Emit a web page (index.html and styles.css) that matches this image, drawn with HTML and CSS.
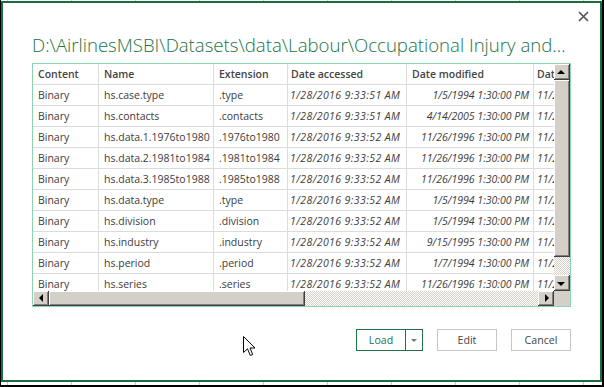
FILE: index.html
```html
<!DOCTYPE html>
<html lang="en">
<head>
    <meta charset="UTF-8">
    <meta name="viewport" content="width=device-width, initial-scale=1.0">
    <title>Navigator</title>
    <link rel="stylesheet" href="styles.css">
</head>
<body>
<div class="screen">
    <div class="sheet-top"></div>

    <div class="dialog">
        <div class="dialog-head">
            <button class="close" title="Close">
                <svg width="11" height="11" viewBox="0 0 11 11"><path d="M1 1L10 10M10 1L1 10" stroke="#555" stroke-width="1.7"/></svg>
            </button>
        </div>

        <h2 class="path-title">D:\AirlinesMSBI\Datasets\data\Labour\Occupational Injury and...</h2>

        <div class="grid-box">
            <div class="grid-main">
                <div class="viewport">
                    <table class="files">
                        <thead>
                            <tr>
                                <th class="c-content">Content</th>
                                <th class="c-name">Name</th>
                                <th class="c-ext">Extension</th>
                                <th class="c-acc">Date accessed</th>
                                <th class="c-mod">Date modified</th>
                                <th class="c-cre">Date created</th>
                            </tr>
                        </thead>
                        <tbody>
                            <tr><td>Binary</td><td>hs.case.type</td><td>.type</td><td class="date acc">1/28/2016 9:33:51 AM</td><td class="date">1/5/1994 1:30:00 PM</td><td class="date left">11/26/1996 1:30:00 PM</td></tr>
                            <tr><td>Binary</td><td>hs.contacts</td><td>.contacts</td><td class="date acc">1/28/2016 9:33:51 AM</td><td class="date">4/14/2005 1:30:00 PM</td><td class="date left">11/26/1996 1:30:00 PM</td></tr>
                            <tr><td>Binary</td><td>hs.data.1.1976to1980</td><td>.1976to1980</td><td class="date acc">1/28/2016 9:33:52 AM</td><td class="date">11/26/1996 1:30:00 PM</td><td class="date left">11/26/1996 1:30:00 PM</td></tr>
                            <tr><td>Binary</td><td>hs.data.2.1981to1984</td><td>.1981to1984</td><td class="date acc">1/28/2016 9:33:52 AM</td><td class="date">11/26/1996 1:30:00 PM</td><td class="date left">11/26/1996 1:30:00 PM</td></tr>
                            <tr><td>Binary</td><td>hs.data.3.1985to1988</td><td>.1985to1988</td><td class="date acc">1/28/2016 9:33:52 AM</td><td class="date">11/26/1996 1:30:00 PM</td><td class="date left">11/26/1996 1:30:00 PM</td></tr>
                            <tr><td>Binary</td><td>hs.data.type</td><td>.type</td><td class="date acc">1/28/2016 9:33:52 AM</td><td class="date">1/5/1994 1:30:00 PM</td><td class="date left">11/26/1996 1:30:00 PM</td></tr>
                            <tr><td>Binary</td><td>hs.division</td><td>.division</td><td class="date acc">1/28/2016 9:33:52 AM</td><td class="date">1/5/1994 1:30:00 PM</td><td class="date left">11/26/1996 1:30:00 PM</td></tr>
                            <tr><td>Binary</td><td>hs.industry</td><td>.industry</td><td class="date acc">1/28/2016 9:33:52 AM</td><td class="date">9/15/1995 1:30:00 PM</td><td class="date left">11/26/1996 1:30:00 PM</td></tr>
                            <tr><td>Binary</td><td>hs.period</td><td>.period</td><td class="date acc">1/28/2016 9:33:52 AM</td><td class="date">1/7/1994 1:30:00 PM</td><td class="date left">11/26/1996 1:30:00 PM</td></tr>
                            <tr><td>Binary</td><td>hs.series</td><td>.series</td><td class="date acc">1/28/2016 9:33:52 AM</td><td class="date">11/26/1996 1:30:00 PM</td><td class="date left">11/26/1996 1:30:00 PM</td></tr>
                        </tbody>
                    </table>
                </div>
                <div class="vscroll">
                    <div class="sb-btn up"></div>
                    <div class="sb-thumb"></div>
                    <div class="sb-track"></div>
                    <div class="sb-btn down"></div>
                </div>
            </div>
            <div class="hscroll">
                <div class="sb-btn left"></div>
                <div class="sb-thumb"></div>
                <div class="sb-track"></div>
                <div class="sb-btn right"></div>
                <div class="sb-corner"></div>
            </div>
        </div>

        <div class="actions">
            <div class="split">
                <button class="load">Load</button><button class="drop"><span class="caret"></span></button>
            </div>
            <button class="btn">Edit</button>
            <button class="btn">Cancel</button>
        </div>

        <!-- mouse pointer left over the dialog -->
        <svg class="cursor" width="13" height="21" viewBox="0 0 13 21">
            <path d="M0.5 0.5L0.5 16.5L4.5 12.8L7.3 19.5L9.7 18.5L7 12L12 12Z" fill="#fff" stroke="#000" stroke-width="1" stroke-linejoin="miter"/>
        </svg>
    </div>

    <div class="sheet-bottom"></div>
</div>
</body>
</html>
```

FILE: styles.css
```css
* {
    box-sizing: border-box;
}

body {
    margin: 0;
    background: #fff;
    font-family: "Open Sans", "Noto Sans", sans-serif;
    color: #444;
}

.screen {
    width: 604px;
    height: 387px;
    border-left: 1px solid #000;
    border-right: 2px solid #000;
    border-bottom: 2px solid #000;
    display: flex;
    flex-direction: column;
}

.sheet-top,
.sheet-bottom {
    background: repeating-linear-gradient(90deg, #fff 0 6px, #c8c8c8 6px 7px, #fff 7px 64px);
}

.sheet-top {
    height: 1px;
}

.sheet-bottom {
    height: 3px;
}

.dialog {
    position: relative;
    height: 381px;
    border: 2px solid #1d6b40;
    padding: 0 29px;
    background: #fff;
    display: flex;
    flex-direction: column;
}

.dialog-head {
    height: 30px;
    display: flex;
    justify-content: flex-end;
    align-items: flex-start;
}

.close {
    width: 11px;
    height: 11px;
    margin: 8px -18px 0 0;
    padding: 0;
    border: 0;
    background: none;
    display: block;
}

.close svg {
    display: block;
}

.path-title {
    margin: 0 0 6px;
    font-size: 18.6px;
    font-weight: 300;
    line-height: 24px;
    color: #217346;
    white-space: nowrap;
}

.grid-box {
    width: 539px;
    height: 244px;
    border: 1px solid #8fd4b0;
    display: flex;
    flex-direction: column;
}

.grid-main {
    display: flex;
    height: 227px;
}

.viewport {
    width: 521px;
    overflow: hidden;
}

.files {
    table-layout: fixed;
    border-collapse: separate;
    border-spacing: 0;
    width: 601px;
    font-size: 10.5px;
}

.files th,
.files td {
    line-height: 20px;
    padding: 0 4px 0 5px;
    border-right: 1px solid #dcdcdc;
    border-bottom: 1px solid #dcdcdc;
    text-align: left;
    white-space: nowrap;
    overflow: hidden;
    color: #3c3c3c;
    font-weight: 400;
}

.files th {
    font-weight: 600;
    color: #444;
}

.c-content { width: 66px; }
.c-name { width: 115px; }
.c-ext { width: 74px; }
.c-acc { width: 119px; }
.c-mod { width: 127px; }
.c-cre { width: 100px; }

.files th.c-acc,
.files th.c-cre {
    padding-left: 3px;
}

.files td.date {
    font-style: italic;
    text-align: right;
    padding-right: 4px;
    padding-left: 2px;
}

.files td.acc {
    text-align: left;
    letter-spacing: 0.4px;
}

.files td.left {
    text-align: left;
    padding-left: 3px;
}

/* classic scrollbars */
.vscroll {
    width: 16px;
    display: flex;
    flex-direction: column;
}

.hscroll {
    height: 15px;
    display: flex;
}

.sb-btn,
.sb-thumb,
.sb-corner {
    background: #d4d0c8;
}

.sb-btn,
.sb-thumb {
    box-shadow: inset -1px -1px #404040, inset 1px 1px #fff, inset -2px -2px #808080;
    position: relative;
}

.sb-track {
    background: repeating-conic-gradient(#d4d0c8 0 25%, #fff 0 50%) 0 0 / 2px 2px;
}

.vscroll .sb-btn { height: 16px; }
.vscroll .sb-thumb { height: 177px; }
.vscroll .sb-track { height: 18px; }

.hscroll .sb-btn { width: 16px; }
.hscroll .sb-thumb { width: 256px; }
.hscroll .sb-track { width: 233px; }
.sb-corner { width: 16px; }

.sb-btn::before {
    content: "";
    position: absolute;
    width: 0;
    height: 0;
    border: 4px solid transparent;
}

.sb-btn.up::before {
    left: 3px;
    top: 2px;
    border-bottom-color: #000;
}

.sb-btn.down::before {
    left: 3px;
    top: 7px;
    border-top-color: #000;
}

.sb-btn.left::before {
    left: 2px;
    top: 3px;
    border-right-color: #000;
}

.sb-btn.right::before {
    left: 7px;
    top: 3px;
    border-left-color: #000;
}

/* footer buttons */
.actions {
    margin-top: 22px;
    display: flex;
    justify-content: flex-end;
    gap: 14px;
}

.split {
    display: flex;
    height: 22px;
    border: 1px solid #217346;
}

.actions button {
    font-family: inherit;
    font-size: 10.6px;
    background: #fff;
    padding: 0;
    margin: 0;
}

.load {
    width: 49px;
    height: 20px;
    border: 0;
    border-right: 1px solid #217346;
    color: #217346;
}

.drop {
    width: 16px;
    height: 20px;
    border: 0;
    position: relative;
}

.caret {
    position: absolute;
    left: 5px;
    top: 9px;
    border: 3px solid transparent;
    border-top-color: #777;
}

.btn {
    width: 60px;
    height: 22px;
    border: 1px solid #c6c6c6;
    color: #444;
}

.cursor {
    position: absolute;
    left: 240px;
    top: 333px;
}
```
